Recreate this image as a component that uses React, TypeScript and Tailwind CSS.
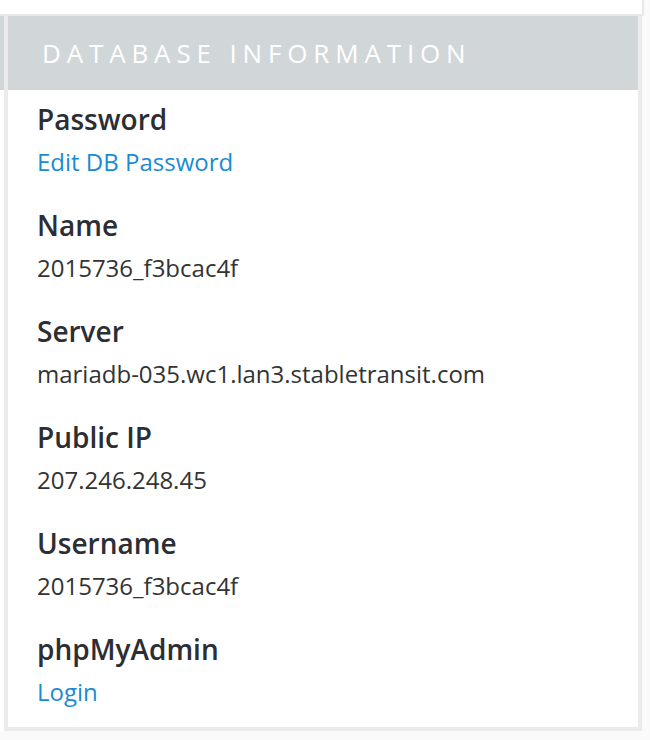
const rows: { label: string; value: string; link?: boolean }[] = [
  { label: 'Password', value: 'Edit DB Password', link: true },
  { label: 'Name', value: '2015736_f3bcac4f' },
  { label: 'Server', value: 'mariadb-035.wc1.lan3.stabletransit.com' },
  { label: 'Public IP', value: '207.246.248.45' },
  { label: 'Username', value: '2015736_f3bcac4f' },
  { label: 'phpMyAdmin', value: 'Login', link: true },
];

export default function App() {
  return (
    <div
      className="w-[650px] h-[740px] overflow-hidden bg-[#fafafa] flex flex-col"
      style={{ fontFamily: '"Open Sans", "Noto Sans", sans-serif' }}
    >
      {/* bande du panneau au-dessus */}
      <div className="h-[16px] w-[644px] shrink-0 bg-white border-b-2 border-r-2 border-[#e8e8e8]" />

      <div className="flex">
        {/* bord du panneau voisin */}
        <div className="w-[4px] flex flex-col">
          <div className="h-[74px] bg-[#d1d6d9]" />
          <div className="flex-1 bg-white" />
        </div>

        <div className="w-[638px] border-x-4 border-b-4 border-[#ebebeb] bg-white">
          <div className="h-[74px] bg-[#d1d6d9] flex items-center pl-[34px]">
            <h2 className="text-[26px] font-normal tracking-[0.225em] text-white uppercase">
              Database Information
            </h2>
          </div>

          <div className="pl-[29px] pt-[9px] pb-[12px] flex flex-col gap-[20px]">
            {rows.map((r) => (
              <div key={r.label} className="flex flex-col">
                <div className="text-[28px] font-semibold text-[#2b2e33] leading-[40px]">{r.label}</div>
                <div
                  className={
                    r.link
                      ? 'text-[24px] text-[#1a8bd3] leading-[46px]'
                      : 'text-[24px] text-[#333333] leading-[46px]'
                  }
                >
                  {r.value}
                </div>
              </div>
            ))}
          </div>
        </div>
      </div>
    </div>
  );
}
